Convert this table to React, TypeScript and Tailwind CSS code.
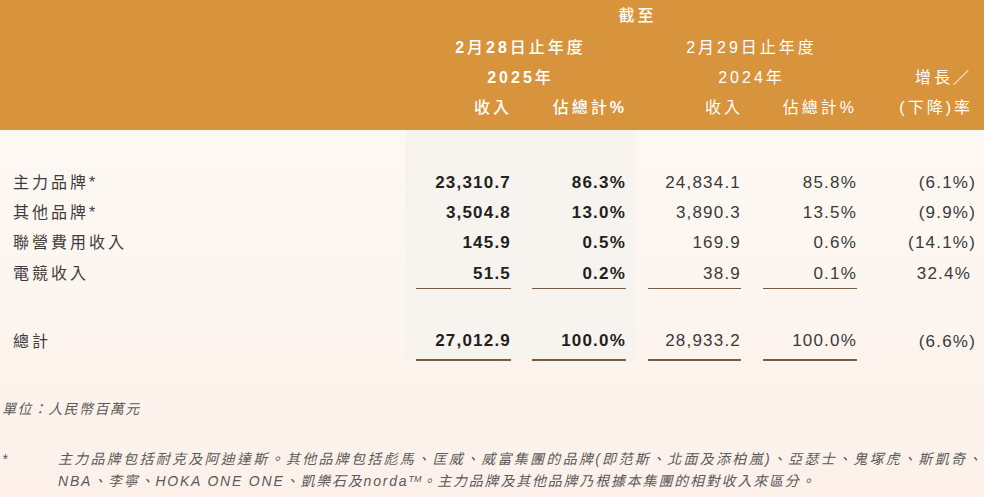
import React from "react";

const FONT = { fontFamily: '"Liberation Sans", "Noto Sans CJK TC", sans-serif' };

function NumCol({
  w,
  cells,
  total,
  underline,
  pl,
  pr,
  bold,
}: {
  w: string;
  cells: string[];
  total: string;
  underline: boolean;
  pl: string;
  pr: string;
  bold?: boolean;
}) {
  const txt = bold ? "font-bold text-[#231f20]" : "text-[#3a3a3a]";
  return (
    <div className={`${w} ${pl} ${pr} flex flex-col pt-[38px] pb-[1px]`}>
      {cells.map((c, i) => (
        <div
          key={i}
          className={`h-[30px] flex items-center justify-end text-[17px] tracking-[1.2px] ${txt} ${
            i === 3 && underline ? "border-b border-[#7a5c3a] h-[31px] pt-[1px]" : ""
          }`}
        >
          {c}
        </div>
      ))}
      <div className="h-[37px]" />
      <div
        className={`h-[35px] pb-[3px] flex items-center justify-end text-[17px] tracking-[1.2px] ${txt} ${
          underline ? "border-b-2 border-[#7a5c3a]" : ""
        }`}
      >
        {total}
      </div>
    </div>
  );
}

export default function App() {
  return (
    <div
      className="w-[984px] h-[497px] overflow-hidden bg-gradient-to-b from-[#fefaf7] via-[#fdf6f1] to-[#fdf1ea]"
      style={FONT}
    >
      {/* Header */}
      <div className="h-[130px] bg-[#d8943d] text-white text-[16px] tracking-[3px] grid grid-cols-[405px_116px_115px_116px_115px_117px] grid-rows-[32px_32px_28px_32px]">
        <div className="col-start-2 col-span-4 flex items-center justify-center font-medium pl-[3px]">
          截至
        </div>
        <div className="col-start-2 col-span-2 flex items-center justify-center font-medium">
          <span className="font-bold">2</span>月<span className="font-bold">28</span>日止年度
        </div>
        <div className="col-start-4 col-span-2 flex items-center justify-center">
          2月29日止年度
        </div>
        <div className="col-start-2 col-span-2 flex items-center justify-center font-medium">
          <span className="font-bold">2025</span>年
        </div>
        <div className="col-start-4 col-span-2 flex items-center justify-center">
          2024年
        </div>
        <div className="col-start-6 flex items-center justify-end pr-[12px]">
          增長／
        </div>
        <div className="col-start-2 flex items-center justify-end pr-[9px] font-medium">
          收入
        </div>
        <div className="col-start-3 flex items-center justify-end pr-[9px] font-medium">
          佔總計<span className="font-bold">%</span>
        </div>
        <div className="col-start-4 flex items-center justify-end pr-[9px]">
          收入
        </div>
        <div className="col-start-5 flex items-center justify-end pr-[10px]">
          佔總計%
        </div>
        <div className="col-start-6 flex items-center justify-end pr-[11px]">
          (下降)率
        </div>
      </div>

      {/* Body */}
      <div className="flex">
        <div className="w-[405px] pl-[13px] pt-[38px] flex flex-col text-[16px] tracking-[3px] text-[#3d3d3d]">
          <div className="h-[30px] flex items-center">主力品牌*</div>
          <div className="h-[30px] flex items-center">其他品牌*</div>
          <div className="h-[30px] flex items-center">聯營費用收入</div>
          <div className="h-[31px] flex items-center">電競收入</div>
          <div className="h-[37px]" />
          <div className="h-[32px] flex items-center">總計</div>
        </div>
        <div className="flex bg-[#f7f3ee]">
          <NumCol
            w="w-[116px]"
            pl="pl-[11px]"
            pr="pr-[10px]"
            bold
            underline
            cells={["23,310.7", "3,504.8", "145.9", "51.5"]}
            total="27,012.9"
          />
          <NumCol
            w="w-[115px]"
            pl="pl-[11px]"
            pr="pr-[10px]"
            bold
            underline
            cells={["86.3%", "13.0%", "0.5%", "0.2%"]}
            total="100.0%"
          />
        </div>
        <NumCol
          w="w-[116px]"
          pl="pl-[12px]"
          pr="pr-[11px]"
          underline
          cells={["24,834.1", "3,890.3", "169.9", "38.9"]}
          total="28,933.2"
        />
        <NumCol
          w="w-[115px]"
          pl="pl-[11px]"
          pr="pr-[10px]"
          underline
          cells={["85.8%", "13.5%", "0.6%", "0.1%"]}
          total="100.0%"
        />
        <div className="w-[117px] pr-[8px] pt-[38px] flex flex-col text-[17px] tracking-[1.2px] text-[#3a3a3a]">
          <div className="h-[30px] flex items-center justify-end">(6.1%)</div>
          <div className="h-[30px] flex items-center justify-end">(9.9%)</div>
          <div className="h-[30px] flex items-center justify-end">(14.1%)</div>
          <div className="h-[31px] flex items-center justify-end pr-[5px]">32.4%</div>
          <div className="h-[37px]" />
          <div className="h-[32px] flex items-center justify-end">(6.6%)</div>
        </div>
      </div>

      {/* Footer */}
      <div className="italic text-[#5a5a5a] text-[14px]">
        <div className="mt-[36px] pl-[2px] tracking-[1.4px] leading-[22px]">
          單位：人民幣百萬元
        </div>
        <div className="mt-[28px] flex leading-[22px]">
          <div className="w-[58px] pl-[2px]">*</div>
          <div className="w-[925px]">
            <div className="text-justify [text-align-last:justify] whitespace-nowrap tracking-[1.8px]">
              主力品牌包括耐克及阿迪達斯。其他品牌包括彪馬、匡威、威富集團的品牌(即范斯、北面及添柏嵐)、亞瑟士、鬼塚虎、斯凱奇、
            </div>
            <div className="whitespace-nowrap tracking-[1.8px]">
              NBA、李寧、HOKA ONE ONE、凱樂石及norda<sup className="text-[9px] tracking-normal">TM</sup>。主力品牌及其他品牌乃根據本集團的相對收入來區分。
            </div>
          </div>
        </div>
      </div>
    </div>
  );
}
